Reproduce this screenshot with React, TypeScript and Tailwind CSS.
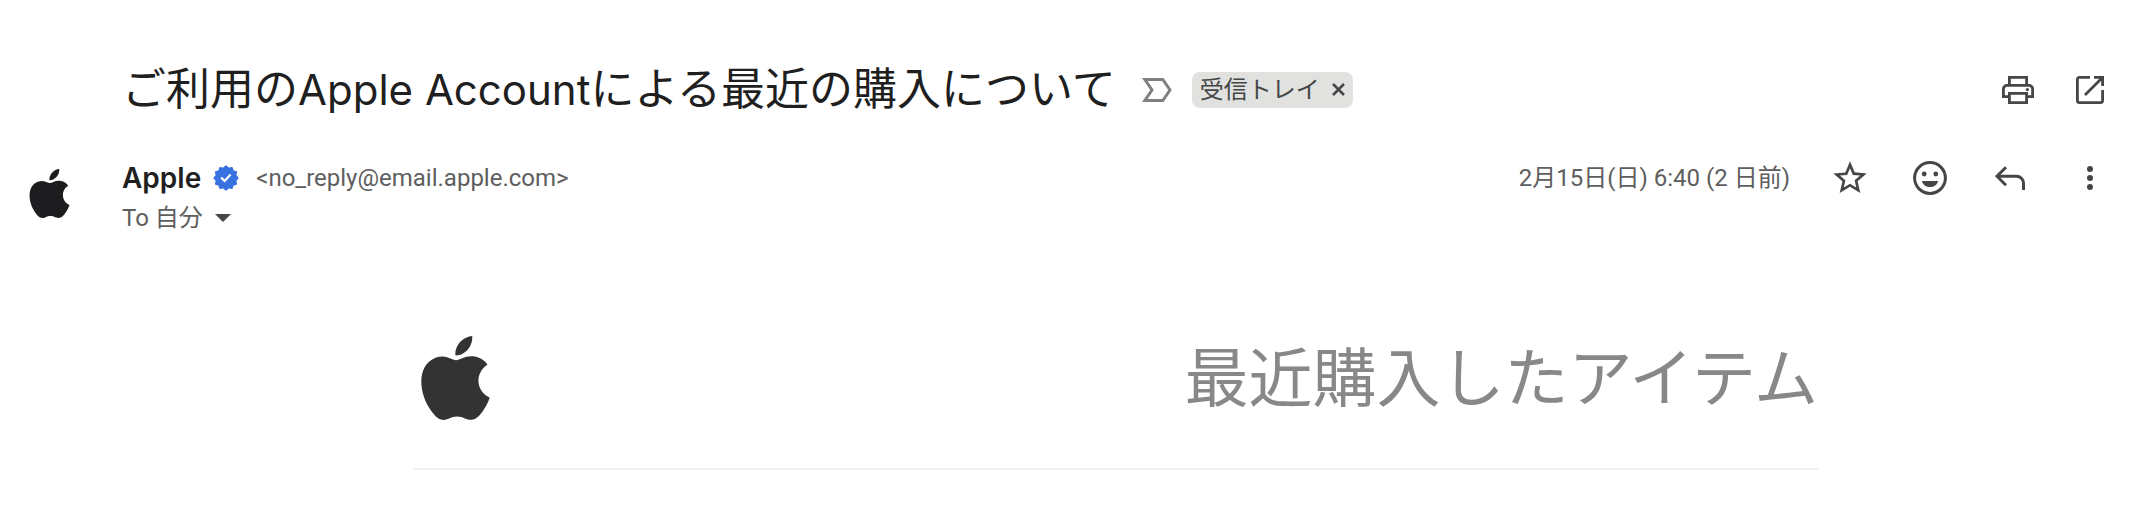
import type { ReactNode } from "react";

type IconButtonProps = {
  label: string;
  children: ReactNode;
};

function IconButton({ label, children }: IconButtonProps) {
  return (
    <button
      type="button"
      aria-label={label}
      className="flex size-10 shrink-0 cursor-pointer items-center justify-center text-[#444746]"
    >
      {children}
    </button>
  );
}

function AppleLogo({ className }: { className: string }) {
  return (
    <svg viewBox="2 0 20 24" fill="currentColor" className={className} role="img" aria-label="Apple">
      <path d="M12.152 6.896c-.948 0-2.415-1.078-3.96-1.04-2.04.027-3.91 1.183-4.961 3.014-2.117 3.675-.546 9.103 1.519 12.09 1.013 1.454 2.208 3.09 3.792 3.039 1.52-.065 2.09-.987 3.935-.987 1.831 0 2.35.987 3.96.948 1.637-.026 2.676-1.48 3.676-2.948 1.156-1.688 1.636-3.325 1.662-3.415-.039-.013-3.182-1.221-3.22-4.857-.026-3.04 2.48-4.494 2.597-4.559-1.429-2.09-3.623-2.324-4.39-2.376-2-.156-3.675 1.09-4.61 1.09zM15.53 3.83c.843-1.012 1.4-2.427 1.245-3.83-1.207.052-2.662.805-3.532 1.818-.78.896-1.454 2.338-1.273 3.714 1.338.104 2.715-.688 3.559-1.701" />
    </svg>
  );
}

// twelve-pointed seal, centred on 0,0
const sealPoints = Array.from({ length: 24 }, (_, i) => {
  const radius = i % 2 === 0 ? 12 : 10;
  const angle = (i * Math.PI) / 12;
  return `${(radius * Math.cos(angle)).toFixed(2)},${(radius * Math.sin(angle)).toFixed(2)}`;
}).join(" ");

function VerifiedBadge() {
  return (
    <svg viewBox="-13 -13 26 26" className="size-[26px] shrink-0" role="img" aria-label="認証済み">
      <polygon points={sealPoints} fill="#3871e0" stroke="#3871e0" strokeWidth="1.4" strokeLinejoin="round" />
      <path d="M-4.8-.4-1.4 3 4.6-3.4" fill="none" stroke="#fff" strokeWidth="2.2" />
    </svg>
  );
}

function SubjectRow() {
  return (
    <div className="flex items-center pl-[122px]">
      <h1 className="text-[44px] leading-[48px] whitespace-nowrap text-[#1f1f1f]">
        ご利用の<span className="text-[42px]">Apple Account</span>による最近の購入について
      </h1>

      <button type="button" aria-label="重要マーク" className="ml-[26px] shrink-0 cursor-pointer text-[#80807f]">
        <svg viewBox="0 0 30 24" fill="none" stroke="currentColor" strokeWidth="3" className="h-6 w-[30px]">
          <path d="M2.8 1.5H20.8L28 12l-7.2 10.5H2.8L10 12z" />
        </svg>
      </button>

      <div className="ml-5 flex h-9 shrink-0 items-center gap-3 rounded-lg bg-[#e1e1e0] px-2 text-[24px] leading-9 text-[#444746]">
        <span>受信トレイ</span>
        <button type="button" aria-label="受信トレイを削除" className="cursor-pointer">
          <svg viewBox="0 0 13 13" fill="none" stroke="currentColor" strokeWidth="2.5" className="size-[13px]">
            <path d="m1 1 11 11M12 1 1 12" />
          </svg>
        </button>
      </div>

      <div className="ml-auto flex gap-8">
        <IconButton label="すべて印刷">
          <svg viewBox="0 0 32 28" fill="none" stroke="currentColor" strokeWidth="2.8" className="h-7 w-8">
            <path d="M7.4 9V1.4h17.2V9" />
            <path d="M7.4 20.6h-6V13A3.6 3.6 0 0 1 5 9.4h22a3.6 3.6 0 0 1 3.6 3.6v7.6h-6" />
            <path d="M7.4 17.4h17.2v9.2H7.4z" />
            <circle cx="25.4" cy="13.6" r="1.6" fill="currentColor" stroke="none" />
          </svg>
        </IconButton>
        <IconButton label="新しいウィンドウで開く">
          <svg viewBox="0 0 28 28" fill="none" stroke="currentColor" strokeWidth="2.8" className="size-7">
            <path d="M14 1.4H3.4a2 2 0 0 0-2 2v21.2a2 2 0 0 0 2 2h21.2a2 2 0 0 0 2-2V14" />
            <path d="M18 1.4h8.6V10M9 19 26 2" />
          </svg>
        </IconButton>
      </div>
    </div>
  );
}

function SenderRow() {
  return (
    <div className="flex items-start pl-[29px]">
      <AppleLogo className="mt-[11px] h-[49px] w-[41px] shrink-0 text-[#1d1d1f]" />

      <div className="ml-[52px] min-w-0">
        <div className="flex h-10 items-center whitespace-nowrap">
          <span className="text-[28px] font-semibold text-[#1f1f1f]">Apple</span>
          <span className="ml-3">
            <VerifiedBadge />
          </span>
          <span className="ml-[17px] font-['Roboto','Noto_Sans_CJK_JP',sans-serif] text-[24px] text-[#5e5e5e]">
            &lt;no_reply@email.apple.com&gt;
          </span>
        </div>
        <button
          type="button"
          aria-label="詳細を表示"
          className="flex h-10 cursor-pointer items-center gap-3 font-['Roboto','Noto_Sans_CJK_JP',sans-serif] text-[24px] text-[#5e5e5e]"
        >
          To 自分
          <svg viewBox="0 0 16 8" fill="#444746" className="h-2 w-4">
            <path d="M0 0h16L8 8z" />
          </svg>
        </button>
      </div>

      <div className="ml-auto flex h-10 items-center gap-10">
        <time
          dateTime="02-15T06:40"
          className="font-['Roboto','Noto_Sans_CJK_JP',sans-serif] text-[24px] whitespace-nowrap text-[#5e5e5e]"
        >
          2月15日(日) 6:40 (2 日前)
        </time>
        <IconButton label="スター">
          <svg viewBox="0 0 24 24" fill="currentColor" className="size-10">
            <path d="m22 9.24-7.19-.62L12 2 9.19 8.63 2 9.24l5.46 4.73L5.82 21 12 17.27 18.18 21l-1.63-7.03zM12 15.4l-3.76 2.27 1-4.28-3.32-2.88 4.38-.38L12 6.1l1.71 4.04 4.38.38-3.32 2.88 1 4.28z" />
          </svg>
        </IconButton>
        <IconButton label="リアクションを追加">
          <svg viewBox="0 0 34 34" fill="currentColor" className="size-[34px]">
            <circle cx="17" cy="17" r="15.4" fill="none" stroke="currentColor" strokeWidth="3" />
            <circle cx="11.2" cy="13" r="2.4" />
            <circle cx="22.8" cy="13" r="2.4" />
            <path d="M8.8 20h16.4a8.6 8.6 0 0 1-16.4 0z" />
          </svg>
        </IconButton>
        <IconButton label="返信">
          <svg viewBox="0 0 30 24" fill="none" stroke="currentColor" strokeWidth="3" className="h-6 w-[30px]">
            <path d="M11 1.2 2 10.2l9 9" />
            <path d="M2 10.2h19.5a7 7 0 0 1 7 7V24" />
          </svg>
        </IconButton>
        <IconButton label="その他">
          <svg viewBox="0 0 6 24" fill="currentColor" className="h-6 w-1.5">
            <circle cx="3" cy="3" r="3" />
            <circle cx="3" cy="12" r="3" />
            <circle cx="3" cy="21" r="3" />
          </svg>
        </IconButton>
      </div>
    </div>
  );
}

function MessageBody() {
  return (
    <section className="pr-0.5 pl-[124px]">
      <div className="mx-auto flex max-w-[1404px] items-center justify-between border-b-2 border-[#f0f0f0] pb-[42px] pl-1.5">
        <AppleLogo className="h-[84px] w-[71px] text-[#333]" />
        <h2 className="text-[64px] leading-[96px] text-[#888]">最近購入したアイテム</h2>
      </div>
    </section>
  );
}

export default function App() {
  return (
    <main className="bg-white pt-[65px] pr-7 font-['Inter','Noto_Sans_CJK_JP',sans-serif]">
      <SubjectRow />
      <div className="mt-11">
        <SenderRow />
      </div>
      <div className="mt-[92px]">
        <MessageBody />
      </div>
    </main>
  );
}
